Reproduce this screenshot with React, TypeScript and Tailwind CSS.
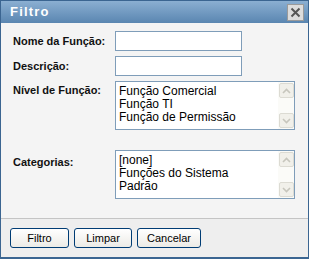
import React from 'react';

const font = { fontFamily: '"Liberation Sans", Arial, sans-serif' };

const ScrollArrow = ({ up }: { up: boolean }) => (
  <div className="w-[15px] h-[15px] bg-[#f1f0ea] border border-[#dcdbd3] rounded-[2px] flex items-center justify-center">
    <svg width="9" height="6" viewBox="0 0 9 6">
      <path
        d={up ? 'M1 5 L4.5 1.5 L8 5' : 'M1 1 L4.5 4.5 L8 1'}
        fill="none"
        stroke="#c7c6bd"
        strokeWidth="1.6"
      />
    </svg>
  </div>
);

const ListBox = ({ items }: { items: string[] }) => (
  <div className="w-[180px] h-[49px] border border-[#7f9db9] bg-white flex">
    <div className="flex-1 pl-[3px] pt-[3px] text-[12px] leading-[13px] text-black">
      {items.map((item) => (
        <div key={item} className="whitespace-nowrap">{item}</div>
      ))}
    </div>
    <div className="w-[16px] flex flex-col justify-between bg-[#fbfbf8] p-px">
      <ScrollArrow up />
      <ScrollArrow up={false} />
    </div>
  </div>
);

const Button = ({ label, w }: { label: string; w: string }) => (
  <button
    className={`${w} h-[20px] rounded-[3px] border border-[#003c74] bg-gradient-to-b from-white to-[#ecebe6] text-[11px] text-black flex items-center justify-center`}
    style={font}
  >
    {label}
  </button>
);

export default function App() {
  return (
    <div
      className="w-[309px] h-[259px] border border-[#3b6591] border-b-2 flex flex-col bg-[#f4f4f4] overflow-hidden"
      style={font}
    >
      <div className="h-[22px] bg-gradient-to-b from-[#8bafd2] to-[#5a86b1] flex items-center justify-between pl-[9px] pr-[4px]">
        <span className="text-white font-bold text-[13px] tracking-[1.2px]">Filtro</span>
        <div className="w-[17px] h-[17px] bg-[#dcdcdc] border border-[#9a9a9a] flex items-center justify-center">
          <svg width="11" height="11" viewBox="0 0 11 11">
            <path d="M1.5 1.5 L9.5 9.5 M9.5 1.5 L1.5 9.5" stroke="#555" strokeWidth="2" />
          </svg>
        </div>
      </div>

      <div className="flex-1 pl-[12px] pt-[8px]">
        <div className="grid grid-cols-[102px_auto] gap-y-[5px] text-[11px] text-[#111]">
          <div className="font-bold flex items-center">Nome da Função:</div>
          <div className="w-[127px] h-[20px] border border-[#7f9db9] bg-white" />
          <div className="font-bold flex items-center">Descrição:</div>
          <div className="w-[127px] h-[20px] border border-[#7f9db9] bg-white" />
          <div className="font-bold pt-[1px]">Nível de Função:</div>
          <ListBox items={['Função Comercial', 'Função TI', 'Função de Permissão']} />
          <div className="font-bold pt-[4px] mt-[15px]">Categorias:</div>
          <div className="mt-[15px]">
            <ListBox items={['[none]', 'Funções do Sistema', 'Padrão']} />
          </div>
        </div>
      </div>

      <div className="h-[39px] border-t border-[#c4c4c4] bg-[#eeeeee] flex items-start gap-[5px] pl-[9px] pt-[9px]">
        <Button label="Filtro" w="w-[59px]" />
        <Button label="Limpar" w="w-[58px]" />
        <Button label="Cancelar" w="w-[64px]" />
      </div>
    </div>
  );
}
